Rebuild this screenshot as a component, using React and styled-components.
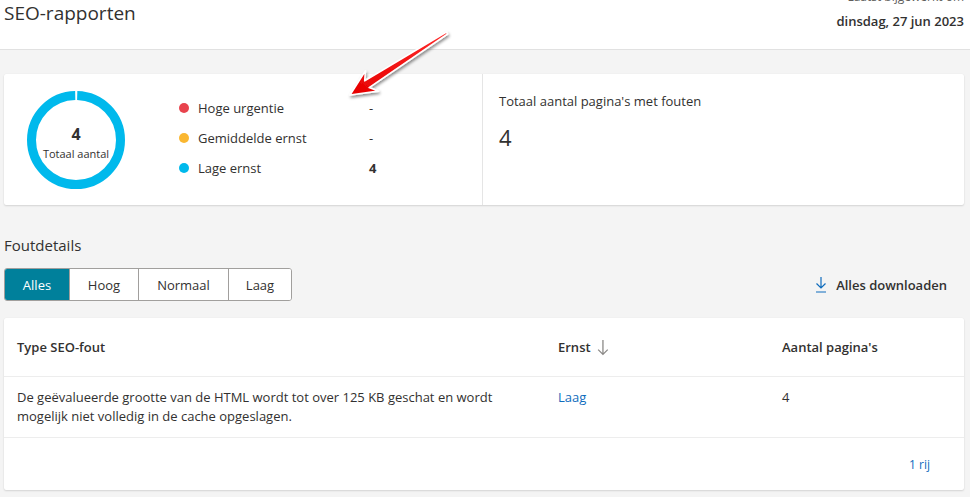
import styled, { createGlobalStyle } from "styled-components";

const GlobalStyle = createGlobalStyle`
   html, body {
      margin: 0;
      padding: 0;
      background: #f4f4f4;
      font-family: "Open Sans", "Noto Sans", sans-serif;
      color: #323130;
      overflow: hidden;
   }
`;

const Page = styled.div`
   position: relative;
   width: 970px;
   height: 497px;
`;

const Header = styled.div`
   display: flex;
   justify-content: space-between;
   align-items: flex-start;
   height: 49px;
   background: #ffffff;
   border-bottom: 1px solid #e1e1e1;
   padding: 0 6px 0 4px;
`;

const Title = styled.h1`
   margin: 0;
   font-size: 19px;
   font-weight: 400;
   line-height: 26px;
   color: #323130;
`;

const Updated = styled.div`
   display: flex;
   flex-direction: column;
   align-items: flex-end;
   margin-top: -11px;
`;

const UpdatedLabel = styled.span`
   font-size: 12px;
   line-height: 16px;
   color: #605e5c;
`;

const UpdatedDate = styled.span`
   font-size: 13px;
   font-weight: 600;
   line-height: 18px;
   margin-top: 7px;
`;

const Main = styled.div`
   padding: 24px 6px 0 4px;
`;

const Card = styled.div`
   background: #ffffff;
   border-radius: 2px;
   box-shadow: 0 1px 2px rgba(0, 0, 0, 0.13), 0 0 1px rgba(0, 0, 0, 0.08);
`;

const SummaryCard = styled(Card)`
   display: grid;
   grid-template-columns: 479px 1fr;
   height: 131px;
`;

const SummaryLeft = styled.div`
   display: flex;
   align-items: center;
   padding-left: 23px;
   border-right: 1px solid #e5e5e5;
`;

const Donut = styled.div`
   position: relative;
   width: 98px;
   height: 98px;
   flex: none;
`;

const DonutCenter = styled.div`
   position: absolute;
   inset: 0;
   display: flex;
   flex-direction: column;
   align-items: center;
   justify-content: center;
   padding-top: 6px;
`;

const DonutValue = styled.span`
   font-size: 16px;
   font-weight: 700;
   line-height: 20px;
`;

const DonutLabel = styled.span`
   font-size: 11px;
   line-height: 16px;
   margin-top: 2px;
`;

const Legend = styled.div`
   display: flex;
   flex-direction: column;
   gap: 12px;
   margin-left: 54px;
   margin-top: -4px;
`;

const LegendRow = styled.div`
   display: grid;
   grid-template-columns: 19px 171px auto;
   align-items: center;
   font-size: 13px;
   line-height: 18px;
`;

const Dot = styled.span`
   width: 10px;
   height: 10px;
   border-radius: 50%;
   background: ${p => p.$color};
`;

const LegendValue = styled.span`
   font-weight: ${p => (p.$bold ? 700 : 400)};
`;

const SummaryRight = styled.div`
   padding: 18px 16px;
`;

const StatLabel = styled.div`
   font-size: 13px;
   line-height: 18px;
`;

const StatValue = styled.div`
   font-size: 22px;
   line-height: 28px;
   margin-top: 13px;
`;

const SectionTitle = styled.h2`
   margin: 30px 0 0;
   font-size: 15px;
   font-weight: 400;
   line-height: 20px;
`;

const Toolbar = styled.div`
   display: flex;
   justify-content: space-between;
   align-items: center;
   margin-top: 13px;
`;

const Segments = styled.div`
   display: flex;
   border: 1px solid #a19f9d;
   border-radius: 3px;
   overflow: hidden;
   background: #ffffff;
`;

const Segment = styled.button`
   height: 31px;
   width: ${p => p.$w}px;
   border: none;
   border-left: ${p => (p.$first ? "none" : "1px solid #a19f9d")};
   background: ${p => (p.$active ? "#00809b" : "#ffffff")};
   color: ${p => (p.$active ? "#ffffff" : "#323130")};
   font-family: inherit;
   font-size: 13px;
   padding: 0;
`;

const Download = styled.button`
   display: flex;
   align-items: center;
   gap: 9px;
   border: none;
   background: none;
   font-family: inherit;
   font-size: 13px;
   font-weight: 600;
   color: #323130;
   padding: 0 17px 0 0;
`;

const TableCard = styled(Card)`
   margin-top: 17px;
`;

const Row = styled.div`
   display: grid;
   grid-template-columns: 541px 224px 1fr;
   align-items: center;
   height: ${p => p.$h}px;
   border-bottom: 1px solid #ededed;
   font-size: 13px;
   line-height: 19px;
`;

const HeadCell = styled.div`
   display: flex;
   align-items: center;
   gap: 6px;
   padding: 0 13px;
   font-weight: 600;
`;

const Cell = styled.div`
   padding: 0 13px;
   align-self: ${p => (p.$top ? "start" : "center")};
   padding-top: ${p => (p.$top ? "11px" : "0")};
`;

const Link = styled.span`
   color: #0f6cbd;
`;

const Footer = styled.div`
   display: flex;
   justify-content: flex-end;
   align-items: center;
   height: 52px;
   padding-right: 34px;
   font-size: 12px;
   color: #0f6cbd;
`;

const ArrowOverlay = styled.svg`
   position: absolute;
   left: 340px;
   top: 25px;
   pointer-events: none;
`;

const ArrowIcon = ({ color, size = 16 }) => (
   <svg width={size * 0.7} height={size} viewBox="0 0 11 16" fill="none" stroke={color} strokeWidth="1.2">
      <path d="M5.5 1 V14.5 M1 10 L5.5 14.5 L10 10" />
   </svg>
);

const DownloadIcon = () => (
   <svg width="12" height="17" viewBox="0 0 12 17" fill="none" stroke="#0f6cbd" strokeWidth="1.2">
      <path d="M6 1 V12 M1.5 7.5 L6 12 L10.5 7.5 M1 16 H11" />
   </svg>
);

const legend = [
   { label: "Hoge urgentie", color: "#e8434d", value: "-" },
   { label: "Gemiddelde ernst", color: "#fab731", value: "-" },
   { label: "Lage ernst", color: "#00b9ec", value: "4", bold: true },
];

const segments = [
   { label: "Alles", w: 64, active: true },
   { label: "Hoog", w: 69 },
   { label: "Normaal", w: 90 },
   { label: "Laag", w: 63 },
];

export default function App() {
   const r = 44.5;
   const c = 2 * Math.PI * r;
   const gap = 2.5;
   return (
      <Page>
         <GlobalStyle />
         <Header>
            <Title>SEO-rapporten</Title>
            <Updated>
               <UpdatedLabel>Laatst bijgewerkt om</UpdatedLabel>
               <UpdatedDate>dinsdag, 27 jun 2023</UpdatedDate>
            </Updated>
         </Header>
         <Main>
            <SummaryCard>
               <SummaryLeft>
                  <Donut>
                     <svg width="98" height="98" viewBox="0 0 98 98">
                        <circle
                           cx="49" cy="49" r={r}
                           fill="none" stroke="#00b9ec" strokeWidth="9"
                           strokeDasharray={`${c - gap} ${gap}`}
                           strokeDashoffset={-gap / 2}
                           transform="rotate(-90 49 49)"
                        />
                     </svg>
                     <DonutCenter>
                        <DonutValue>4</DonutValue>
                        <DonutLabel>Totaal aantal</DonutLabel>
                     </DonutCenter>
                  </Donut>
                  <Legend>
                     {legend.map(item => (
                        <LegendRow key={item.label}>
                           <Dot $color={item.color} />
                           <span>{item.label}</span>
                           <LegendValue $bold={item.bold}>{item.value}</LegendValue>
                        </LegendRow>
                     ))}
                  </Legend>
               </SummaryLeft>
               <SummaryRight>
                  <StatLabel>Totaal aantal pagina's met fouten</StatLabel>
                  <StatValue>4</StatValue>
               </SummaryRight>
            </SummaryCard>

            <SectionTitle>Foutdetails</SectionTitle>
            <Toolbar>
               <Segments>
                  {segments.map((s, i) => (
                     <Segment key={s.label} $w={s.w} $active={s.active} $first={i === 0}>
                        {s.label}
                     </Segment>
                  ))}
               </Segments>
               <Download>
                  <DownloadIcon />
                  Alles downloaden
               </Download>
            </Toolbar>

            <TableCard>
               <Row $h={58}>
                  <HeadCell>Type SEO-fout</HeadCell>
                  <HeadCell>Ernst <ArrowIcon color="#8a8886" size={17} /></HeadCell>
                  <HeadCell>Aantal pagina's</HeadCell>
               </Row>
               <Row $h={60}>
                  <Cell $top>
                     De geëvalueerde grootte van de HTML wordt tot over 125 KB geschat en wordt
                     mogelijk niet volledig in de cache opgeslagen.
                  </Cell>
                  <Cell $top><Link>Laag</Link></Cell>
                  <Cell $top>4</Cell>
               </Row>
               <Footer>1 rij</Footer>
            </TableCard>
         </Main>

         <ArrowOverlay width="120" height="82" viewBox="0 0 120 82">
            <defs>
               <filter id="shadow" x="-20%" y="-20%" width="140%" height="140%">
                  <feDropShadow dx="1" dy="2" stdDeviation="1.5" floodColor="#000" floodOpacity="0.45" />
               </filter>
               <linearGradient id="red" x1="0" y1="1" x2="1" y2="0">
                  <stop offset="0" stopColor="#e60000" />
                  <stop offset="1" stopColor="#ff2a2a" />
               </linearGradient>
            </defs>
            <polygon
               points="10,70 38.4,66.1 29.1,62.6 107.6,9 106.4,7 24.7,55.8 25.4,45.9"
               fill="url(#red)" stroke="#ffffff" strokeWidth="1.6" strokeLinejoin="round"
               filter="url(#shadow)"
            />
         </ArrowOverlay>
      </Page>
   );
}
